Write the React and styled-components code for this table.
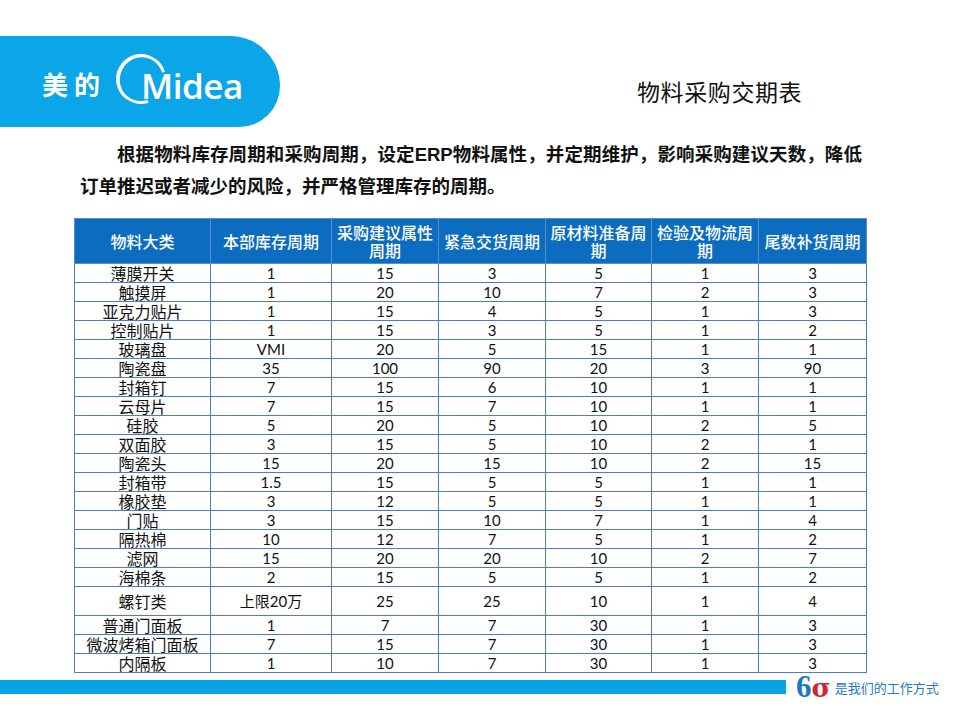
import React from "react";
import styled, { createGlobalStyle } from "styled-components";

const GlobalStyle = createGlobalStyle`
	html, body {
		margin: 0;
		padding: 0;
		background: #ffffff;
	}
	body {
		font-family: "Noto Sans CJK SC", "Liberation Sans", sans-serif;
	}
`;

const columns = [
	{ label: "物料大类", width: 136 },
	{ label: "本部库存周期", width: 121 },
	{ label: "采购建议属性周期", width: 107 },
	{ label: "紧急交货周期", width: 107 },
	{ label: "原材料准备周期", width: 106 },
	{ label: "检验及物流周期", width: 107 },
	{ label: "尾数补货周期", width: 108 },
];

const rows = [
	["薄膜开关", "1", "15", "3", "5", "1", "3"],
	["触摸屏", "1", "20", "10", "7", "2", "3"],
	["亚克力贴片", "1", "15", "4", "5", "1", "3"],
	["控制贴片", "1", "15", "3", "5", "1", "2"],
	["玻璃盘", "VMI", "20", "5", "15", "1", "1"],
	["陶瓷盘", "35", "100", "90", "20", "3", "90"],
	["封箱钉", "7", "15", "6", "10", "1", "1"],
	["云母片", "7", "15", "7", "10", "1", "1"],
	["硅胶", "5", "20", "5", "10", "2", "5"],
	["双面胶", "3", "15", "5", "10", "2", "1"],
	["陶瓷头", "15", "20", "15", "10", "2", "15"],
	["封箱带", "1.5", "15", "5", "5", "1", "1"],
	["橡胶垫", "3", "12", "5", "5", "1", "1"],
	["门贴", "3", "15", "10", "7", "1", "4"],
	["隔热棉", "10", "12", "7", "5", "1", "2"],
	["滤网", "15", "20", "20", "10", "2", "7"],
	["海棉条", "2", "15", "5", "5", "1", "2"],
	["螺钉类", "上限20万", "25", "25", "10", "1", "4"],
	["普通门面板", "1", "7", "7", "30", "1", "3"],
	["微波烤箱门面板", "7", "15", "7", "30", "1", "3"],
	["内隔板", "1", "10", "7", "30", "1", "3"],
];

const tallRows = ["螺钉类"];

const App = () => {
	return (
		<>
			<GlobalStyle />
			<Slide>
				<Header>
					<Banner>
						<BrandCn>美的</BrandCn>
						<LogoMark>
							<Ring />
							<LogoText>Midea</LogoText>
						</LogoMark>
					</Banner>
					<Title>物料采购交期表</Title>
				</Header>

				<Intro>
					根据物料库存周期和采购周期，设定<Latin>ERP</Latin>物料属性，并定期维护，影响采购建议天数，降低订单推迟或者减少的风险，并严格管理库存的周期。
				</Intro>

				<Table>
					<colgroup>
						{columns.map((c) => (
							<col key={c.label} style={{ width: c.width }} />
						))}
					</colgroup>
					<thead>
						<tr>
							{columns.map((c) => (
								<HeadCell key={c.label}>{c.label}</HeadCell>
							))}
						</tr>
					</thead>
					<tbody>
						{rows.map((r) => (
							<BodyRow key={r[0]} $tall={tallRows.includes(r[0])}>
								{r.map((v, i) => (
									<Cell key={i} $first={i === 0}>
										{v}
									</Cell>
								))}
							</BodyRow>
						))}
					</tbody>
				</Table>

				<Footer>
					<FooterBar />
					<Slogan>
						<Six>6</Six>
						<Sigma>σ</Sigma>
						<SloganText>是我们的工作方式</SloganText>
					</Slogan>
				</Footer>
			</Slide>
		</>
	);
};

const Slide = styled.div`
	width: 954px;
	height: 706px;
	padding-top: 36px;
	box-sizing: border-box;
	display: flex;
	flex-direction: column;
	overflow: hidden;
	background: #ffffff;
`;

const Header = styled.div`
	display: flex;
	align-items: flex-start;
`;

const Banner = styled.div`
	width: 280px;
	height: 91px;
	flex-shrink: 0;
	box-sizing: border-box;
	padding-left: 42px;
	display: flex;
	align-items: center;
	background: #0ba6e8;
	border-radius: 0 56px 46px 0;
`;

const BrandCn = styled.div`
	color: #ffffff;
	font-family: "Noto Sans CJK SC", sans-serif;
	font-weight: 700;
	font-size: 26px;
	letter-spacing: 6px;
	line-height: 1;
	margin-top: 4px;
`;

const LogoMark = styled.div`
	position: relative;
	margin-left: 8px;
	padding-left: 27px;
	height: 54px;
	display: flex;
	align-items: center;
	margin-top: -6px;
`;

/* open circle of the Midea mark, gap at the lower right */
const Ring = styled.span`
	position: absolute;
	left: 2px;
	top: 2px;
	width: 50px;
	height: 50px;
	box-sizing: border-box;
	border-radius: 50%;
	border: 3.5px solid #ffffff;
	border-left-width: 4.5px;
	border-right-color: transparent;
	transform: rotate(28deg);
`;

const LogoText = styled.div`
	position: relative;
	color: #ffffff;
	font-family: "Open Sans", "Liberation Sans", sans-serif;
	font-weight: 600;
	font-size: 35px;
	letter-spacing: -0.5px;
	line-height: 1;
	margin-top: 14px;
`;

const Title = styled.div`
	margin-left: 357px;
	margin-top: 45px;
	font-family: "Liberation Serif", "Noto Sans CJK SC", serif;
	font-size: 23px;
	letter-spacing: 0.6px;
	color: #111111;
	line-height: 1.1;
`;

const Intro = styled.p`
	margin: 12px 0 0 80px;
	width: 782px;
	font-family: "Liberation Serif", "Noto Sans CJK SC", serif;
	font-weight: 600;
	font-size: 18.5px;
	line-height: 32px;
	text-indent: 2em;
	text-align: justify;
	color: #111111;
`;

const Latin = styled.span`
	font-family: "Liberation Sans", sans-serif;
	font-weight: 700;
	line-height: 1;
`;

const Table = styled.table`
	margin: 15px 0 0 74px;
	width: 792px;
	border-collapse: collapse;
	table-layout: fixed;
	font-family: "Noto Sans CJK SC", sans-serif;
`;

const HeadCell = styled.th`
	height: 44px;
	padding: 0 3px;
	background: #0c6cbf;
	border: 1px solid #5d8ccb;
	color: #ffffff;
	font-weight: 500;
	font-size: 16px;
	line-height: 18px;
	text-align: center;
	vertical-align: middle;
`;

const BodyRow = styled.tr`
	height: ${(p) => (p.$tall ? "29px" : "19px")};
`;

const Cell = styled.td`
	padding: 0;
	border: 1px solid #4f7db8;
	color: #111111;
	font-family: ${(p) =>
		p.$first
			? `"Noto Sans CJK SC", sans-serif`
			: `"Lato", "Noto Sans CJK SC", sans-serif`};
	font-size: ${(p) => (p.$first ? "16px" : "15px")};
	line-height: 17px;
	text-align: center;
	vertical-align: middle;
	white-space: nowrap;
`;

const Footer = styled.div`
	margin-top: 7px;
	display: flex;
	align-items: flex-start;
`;

const FooterBar = styled.div`
	width: 786px;
	height: 14px;
	flex-shrink: 0;
	background: #06a3e6;
`;

const Slogan = styled.div`
	margin-left: 10px;
	margin-top: -9px;
	display: flex;
	align-items: baseline;
`;

const Six = styled.span`
	font-family: "Liberation Serif", serif;
	font-weight: 700;
	font-size: 31px;
	color: #1d77bf;
	line-height: 1;
`;

const Sigma = styled.span`
	font-family: "DejaVu Serif", serif;
	font-weight: 700;
	font-size: 26px;
	color: #d5262d;
	line-height: 1;
`;

const SloganText = styled.span`
	margin-left: 4px;
	font-family: "Noto Sans CJK SC", sans-serif;
	font-size: 13px;
	color: #2a78c4;
	line-height: 1;
	position: relative;
	top: -4px;
`;

export default App;
